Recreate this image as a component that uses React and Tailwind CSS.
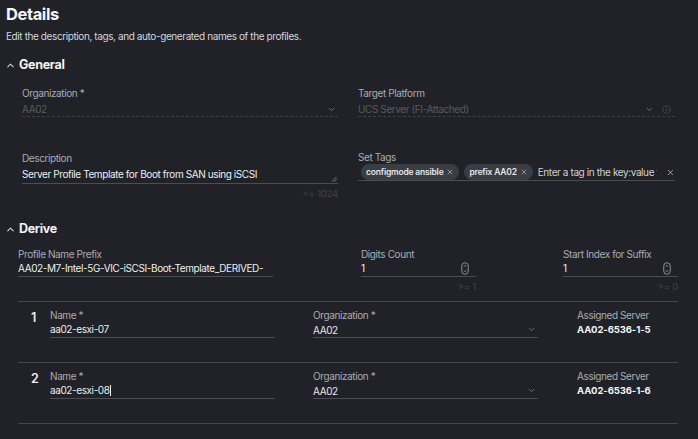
import React from "react";
import { ChevronUp, ChevronDown, Info, X } from "lucide-react";

const LABEL = "text-[10px] leading-[14px] text-[#a9acb2] tracking-[-0.4px]";
const VAL = "text-[10px] tracking-[-0.4px]";

function Spinner() {
  return (
    <svg width="8" height="13" viewBox="0 0 8 13" className="shrink-0">
      <rect x="0.75" y="0.75" width="6.5" height="11.5" rx="3.2" fill="none" stroke="#8d9096" strokeWidth="1" />
      <path d="M2.6 4.6 L4 3.4 L5.4 4.6" fill="none" stroke="#8d9096" strokeWidth="0.9" />
      <path d="M2.6 8.4 L4 9.6 L5.4 8.4" fill="none" stroke="#8d9096" strokeWidth="0.9" />
    </svg>
  );
}

function SectionHeader({ title, className = "" }) {
  return (
    <div className={"flex items-center h-[18px] pl-[5px] gap-[3px] " + className}>
      <ChevronUp size={11} strokeWidth={2.2} color="#d6d8dc" />
      <span className="text-[12.5px] font-bold text-[#f2f3f5] tracking-[-0.3px]">{title}</span>
    </div>
  );
}

function SelectField({ label, value, width, valueClass = "text-[#e6e7ea]", dotted, extra, h = "h-[16px] items-center" }) {
  return (
    <div className="flex flex-col" style={{ width }}>
      <div className={LABEL}>{label}</div>
      <div
        className={
          "flex border-b " + h + " " +
          (dotted ? "border-dashed border-[#3d4046]" : "border-[#4a4d54]")
        }
      >
        <span className={"flex-1 leading-[14px] " + VAL + " " + valueClass}>{value}</span>
        <ChevronDown size={9} strokeWidth={2} color="#8a8d93" className="mr-[2px] self-center" />
        {extra}
      </div>
    </div>
  );
}

function NumberField({ label, hint }) {
  return (
    <div className="flex flex-col w-[115px]">
      <div className={LABEL}>{label}</div>
      <div className="flex items-center h-[16px] border-b border-[#4a4d54]">
        <span className={"flex-1 text-[#eceef0] " + VAL}>1</span>
        <span className="mr-[7px]"><Spinner /></span>
      </div>
      <div className="text-right text-[9.5px] leading-[16px] text-[#3f4248] mt-[2px] tracking-[-0.2px]">{hint}</div>
    </div>
  );
}

function Row({ n, name, server, cursor }) {
  return (
    <div className="border-t border-[#44474d] pt-[6px] pb-[24px] flex">
      <div className="w-[32px] pl-[13px] pt-[3px] text-[12.5px] font-semibold text-[#eceef0] leading-[14px]">{n}</div>
      <div className="flex flex-col w-[225px]">
        <div className={LABEL}>Name *</div>
        <div className="flex items-center h-[16px] border-b border-[#4a4d54]">
          <span className={"text-[#eceef0] " + VAL}>{name}</span>
          {cursor && <span className="w-[1px] h-[11px] bg-[#eceef0]" />}
        </div>
      </div>
      <div className="ml-[38px]">
        <SelectField label="Organization *" value="AA02" width={225} />
      </div>
      <div className="ml-[39px] flex flex-col">
        <div className={LABEL}>Assigned Server</div>
        <div className="h-[16px] flex items-center text-[9.5px] font-bold text-[#f2f3f5] tracking-[-0.1px]">{server}</div>
      </div>
    </div>
  );
}

function Chip({ children }) {
  return (
    <span className="flex items-center h-[16px] px-[5px] gap-[3px] rounded-full bg-[#3a3d44] text-[8.5px] font-semibold text-[#e4e6e9] whitespace-nowrap tracking-[-0.2px]">
      {children} <X size={8} strokeWidth={2} color="#b9bcc1" />
    </span>
  );
}

export default function App() {
  return (
    <div
      className="w-[698px] h-[439px] overflow-hidden bg-[#202227] text-[#eceef0]"
      style={{ fontFamily: "Inter, 'Noto Sans', sans-serif" }}
    >
      <div className="pt-[3px] pl-[6px]">
        <div className="text-[16.5px] font-bold leading-[22px] text-[#f4f5f7] tracking-[-0.4px]">Details</div>
        <div className="mt-[4px] text-[10px] leading-[14px] text-[#d4d6da] tracking-[-0.4px]">
          Edit the description, tags, and auto-generated names of the profiles.
        </div>
      </div>

      <SectionHeader title="General" className="mt-[13px]" />

      <div className="pl-[22px] mt-[12px] flex gap-[20px]">
        <SelectField label="Organization *" value="AA02" width={316} valueClass="text-[#585b61]" dotted h="h-[17px] items-start pt-[2px]" />
        <SelectField
          label="Target Platform"
          value="UCS Server (FI-Attached)"
          width={317}
          valueClass="text-[#585b61]"
          dotted
          h="h-[17px] items-start pt-[2px]"
          extra={<Info size={9} strokeWidth={1.6} color="#55585e" className="ml-[6px] mr-[4px] self-center" />}
        />
      </div>

      <div className="pl-[22px] mt-[32px] flex gap-[20px]">
        <div className="flex flex-col w-[316px] pt-[2px]">
          <div className={LABEL}>Description</div>
          <div className="relative flex items-start pt-[2px] h-[19px] border-b border-[#4a4d54]">
            <span className={"leading-[14px] text-[#eceef0] " + VAL}>Server Profile Template for Boot from SAN using iSCSI</span>
            <svg width="6" height="6" viewBox="0 0 6 6" className="absolute right-[1px] bottom-[1px]">
              <path d="M1 5.5 L5.5 1 M3.5 5.5 L5.5 3.5" stroke="#8a8d93" strokeWidth="0.9" />
            </svg>
          </div>
          <div className="text-right text-[9.5px] leading-[16px] text-[#3f4248] mt-[2px] tracking-[-0.2px]">&lt;= 1024</div>
        </div>
        <div className="flex flex-col w-[317px] pt-[1px]">
          <div className={LABEL}>Set Tags</div>
          <div className="flex items-center h-[17px] border-b border-[#4a4d54] pl-[3px] gap-[5px]">
            <Chip>configmode ansible</Chip>
            <Chip>prefix AA02</Chip>
            <span className={"w-[122px] overflow-hidden whitespace-nowrap text-[#cfd1d5] " + VAL}>
              Enter a tag in the key:value format
            </span>
            <X size={9} strokeWidth={2} color="#c2c4c8" className="ml-[4px]" />
          </div>
        </div>
      </div>

      <SectionHeader title="Derive" className="mt-[18px]" />

      <div className="pl-[18px] pr-[20px] mt-[9px]">
        <div className="flex">
          <div className="flex flex-col w-[255px]">
            <div className={LABEL}>Profile Name Prefix</div>
            <div className="flex items-center h-[16px] border-b border-[#4a4d54]">
              <span className={"text-[#eceef0] whitespace-nowrap " + VAL}>AA02-M7-Intel-5G-VIC-iSCSI-Boot-Template_DERIVED-</span>
            </div>
          </div>
          <div className="ml-[88px]">
            <NumberField label="Digits Count" hint=">= 1" />
          </div>
          <div className="ml-[87px]">
            <NumberField label="Start Index for Suffix" hint=">= 0" />
          </div>
        </div>
        <div className="mt-[6px]">
          <Row n="1" name="aa02-esxi-07" server="AA02-6536-1-5" />
          <Row n="2" name="aa02-esxi-08" server="AA02-6536-1-6" cursor />
          <div className="border-t border-[#44474d]" />
        </div>
      </div>
    </div>
  );
}
